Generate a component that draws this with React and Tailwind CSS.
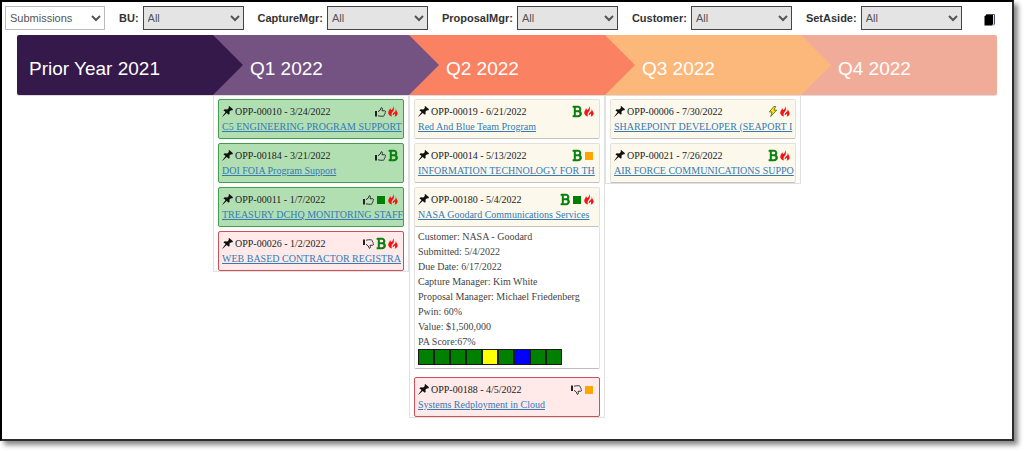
import React, { useState } from 'react'
import { FaBold } from 'react-icons/fa'

const filters = ['BU', 'CaptureMgr', 'ProposalMgr', 'Customer', 'SetAside']

const tones = {
  won: 'border-[#3f9f4c] bg-[#b2dfb2]',
  lost: 'border-[#cd5059] bg-[#ffe9e9]',
  open: 'border-[#e4e2d8] border-b-[#c4c2ba] bg-[#fdf8ec]',
}

const scoreColors = {
  green: 'bg-[#008000]',
  yellow: 'bg-[#ffff00]',
  blue: 'bg-[#0000ff]',
}

const periods = [
  {
    title: 'Prior Year 2021',
    bar: 'bg-[#35194b] rounded-l-xs',
    tip: 'bg-[#35194b]',
    cards: [],
  },
  {
    title: 'Q1 2022',
    bar: 'bg-[#745383]',
    tip: 'bg-[#745383]',
    cards: [
      { id: 'OPP-00010', date: '3/24/2022', name: 'C5 ENGINEERING PROGRAM SUPPORT', tone: 'won', icons: ['up', 'hot'] },
      { id: 'OPP-00184', date: '3/21/2022', name: 'DOI FOIA Program Support', tone: 'won', icons: ['up', 'bid'] },
      { id: 'OPP-00011', date: '1/7/2022', name: 'TREASURY DCHQ MONITORING STAFF', tone: 'won', icons: ['up', 'green', 'hot'] },
      { id: 'OPP-00026', date: '1/2/2022', name: 'WEB BASED CONTRACTOR REGISTRA', tone: 'lost', icons: ['down', 'bid', 'hot'] },
    ],
  },
  {
    title: 'Q2 2022',
    bar: 'bg-[#fa8162]',
    tip: 'bg-[#fa8162]',
    cards: [
      { id: 'OPP-00019', date: '6/21/2022', name: 'Red And Blue Team Program', tone: 'open', icons: ['bid', 'hot'] },
      { id: 'OPP-00014', date: '5/13/2022', name: 'INFORMATION TECHNOLOGY FOR TH', tone: 'open', icons: ['bid', 'orange'] },
      {
        id: 'OPP-00180',
        date: '5/4/2022',
        name: 'NASA Goodard Communications Services',
        tone: 'open',
        icons: ['bid', 'green', 'hot'],
        details: [
          'Customer: NASA - Goodard',
          'Submitted: 5/4/2022',
          'Due Date: 6/17/2022',
          'Capture Manager: Kim White',
          'Proposal Manager: Michael Friedenberg',
          'Pwin: 60%',
          'Value: $1,500,000',
          'PA Score:67%',
        ],
        scores: ['green', 'green', 'green', 'green', 'yellow', 'green', 'blue', 'green', 'green'],
      },
      { id: 'OPP-00188', date: '4/5/2022', name: 'Systems Redployment in Cloud', tone: 'lost', icons: ['down', 'orange'] },
    ],
  },
  {
    title: 'Q3 2022',
    bar: 'bg-[#fcb77b]',
    tip: 'bg-[#fcb77b]',
    cards: [
      { id: 'OPP-00006', date: '7/30/2022', name: 'SHAREPOINT DEVELOPER (SEAPORT I', tone: 'open', icons: ['bolt', 'hot'] },
      { id: 'OPP-00021', date: '7/26/2022', name: 'AIR FORCE COMMUNICATIONS SUPPO', tone: 'open', icons: ['bid', 'hot'] },
    ],
  },
  {
    title: 'Q4 2022',
    bar: 'bg-[#f1ac99] rounded-r-xs',
    cards: [],
  },
]

const Pin = () => (
  <svg viewBox="0 0 20 20" className="h-[11px] w-[11px] shrink-0" fill="#111">
    <path d="M13 0 20 6 18.500 8 16.500 7.500 13.500 10.500 14 14 12.500 16 8.500 12.500 1 19.500 0.500 19 6.500 11 2.500 7.500 5 6 9.500 6.500 12.500 3.500 12 1.500Z" />
  </svg>
)

const Thumb = ({ down }) => (
  <svg viewBox="0 0 22 20" className={`h-[10px] w-[11px] ${down ? '-scale-y-100' : ''}`}>
    <path d="M0 8h4v11H0Z" fill="#222" />
    <path
      d="M6 9.500 10.500 6 12.500 1.500C15 1 15.500 3.500 14 7.500H19.500C21.500 8 21.500 10.500 20 11 20.500 12.500 20 14 19 14.500 19 16.500 18 18.500 15.500 18.500H11L6 17.500"
      fill="none"
      stroke="#222"
      strokeWidth="1.8"
      strokeLinejoin="round"
    />
  </svg>
)

const Flame = () => (
  <svg viewBox="0 0 20 22" className="h-[11px] w-[10px]" fill="#f51414">
    <path d="M10.500 0C13 5 12 8.500 9.500 11.500 7.500 14 6 16.500 8 21 3 20 0 16.500 0.500 12.500 1 9 3.500 8 4 4.500 5.500 6 6 7 6 8.500 9 6.500 11 4 10.500 0Z" />
    <path d="M15.500 4.500C16.500 7 16 8.500 17.500 10.500 21.500 15.500 18.500 20.500 13 21.500 15 18.500 14.500 17 13 15 12.500 17 11 18 9.500 18.500 8.500 14 13 13.500 14.500 10.500 15.500 8.500 16 6.500 15.500 4.500Z" />
  </svg>
)

const Bolt = () => (
  <svg viewBox="0 0 20 24" className="h-[11px] w-[10px]" fill="#fff000" stroke="#6b6930" strokeWidth="2" strokeLinejoin="round">
    <path d="M12 1 2 13h6l-3 10L18 9h-6l4-8Z" />
  </svg>
)

const Book = () => (
  <svg viewBox="0 0 12 12" className="h-3 w-3">
    <path d="M2 1h7v9L8 11.500H0.500V2.500Z" fill="#000" />
    <path d="M2 0.500h8.500V10L9 11.500" stroke="#4a5170" strokeWidth="1" fill="none" />
    <path d="M9.500 2v8" stroke="#c5cae0" strokeWidth="0.600" fill="none" />
  </svg>
)

const StatusIcon = ({ type }) => {
  switch (type) {
    case 'up':
      return <Thumb />
    case 'down':
      return <Thumb down />
    case 'hot':
      return <Flame />
    case 'bid':
      return <FaBold className="h-[13px] w-[10px] text-[#0b800f]" />
    case 'bolt':
      return <Bolt />
    case 'orange':
      return <span className="mx-px h-2 w-2 bg-[#ffa500]" />
    default:
      return <span className="mx-px h-2 w-2 bg-[#008000]" />
  }
}

const Card = ({ card }) => (
  <li>
    <div className={`h-10 overflow-hidden rounded-xs border pt-1 pl-[3px] ${tones[card.tone]}`}>
      <div className="flex h-[15px] items-center pr-[5px]">
        <Pin />
        <span className="ml-0.5 flex-1 text-[#222]">
          {card.id} - {card.date}
        </span>
        <span className="flex items-center gap-0.5">
          {card.icons.map((type) => (
            <StatusIcon key={type} type={type} />
          ))}
        </span>
      </div>
      <a href="#" className="block leading-4 whitespace-nowrap text-[#337ab7] underline">
        {card.name}
      </a>
    </div>
    {card.details && (
      <div className="mb-1 rounded-b-xs border border-t-0 border-[#e2e2e2] border-b-[#bdbdc4] bg-white pt-0.5 pb-[3px] pl-[3px] text-[#444]">
        {card.details.map((line) => (
          <p key={line} className="leading-[15px]">
            {line}
          </p>
        ))}
        <div className="flex">
          {card.scores.map((color, i) => (
            <span key={i} className={`h-4 w-4 border border-[#1a1a1a] ${scoreColors[color]}`} />
          ))}
        </div>
      </div>
    )}
  </li>
)

const App = () => {
  const [view, setView] = useState('Submissions')

  return (
    <div className="min-h-screen bg-white pr-2.5 pb-2.5 font-['Liberation_Sans',Arial,sans-serif]">
      <div className="flex min-h-[441px] flex-col border-2 border-t-black border-r-[#2d2d2d] border-b-[#2d2d2d] border-l-black bg-white shadow-[4px_4px_5px_#888]">
        <div className="flex items-center pt-1 pr-4 pl-[3px] text-[11px] text-[#444]">
          <select
            aria-label="View"
            value={view}
            onChange={(e) => setView(e.target.value)}
            className="h-6 w-[100px] border border-[#bbb] bg-white text-[#555]"
          >
            <option>Submissions</option>
          </select>
          {filters.map((name) => (
            <div key={name} className="ml-[14px] flex items-center gap-1">
              <label htmlFor={name} className="font-bold text-[#333]">
                {name}:
              </label>
              <select id={name} className="h-6 w-[101px] border border-[#444] bg-[#e4e4e4] text-[#555]">
                <option>All</option>
              </select>
            </div>
          ))}
          <button type="button" aria-label="Open report" className="mt-1 ml-auto">
            <Book />
          </button>
        </div>

        <div className="mt-[5px] grid grid-cols-5 items-start pr-[15px] pl-[15px]">
          {periods.map((period, i) => (
            <section key={period.title}>
              <h2
                className={`relative flex h-[60px] items-center pt-2 text-[19px] text-white shadow-[0_1px_0_#ddd] ${i === 0 ? 'pl-3' : 'pl-[37px]'} ${period.bar}`}
              >
                {period.title}
                {period.tip && (
                  <span
                    className={`absolute top-0 left-full z-10 h-full w-[30px] [clip-path:polygon(0_0,100%_50%,0_100%)] ${period.tip}`}
                  />
                )}
              </h2>
              {period.cards.length > 0 && (
                <ul className="flex flex-col gap-1 border border-t-0 border-[#e0e0e0] px-1 pt-1 font-['Liberation_Serif','Times_New_Roman',serif] text-[10px]">
                  {period.cards.map((card) => (
                    <Card key={card.id} card={card} />
                  ))}
                </ul>
              )}
            </section>
          ))}
        </div>
      </div>
    </div>
  )
}

export default App
